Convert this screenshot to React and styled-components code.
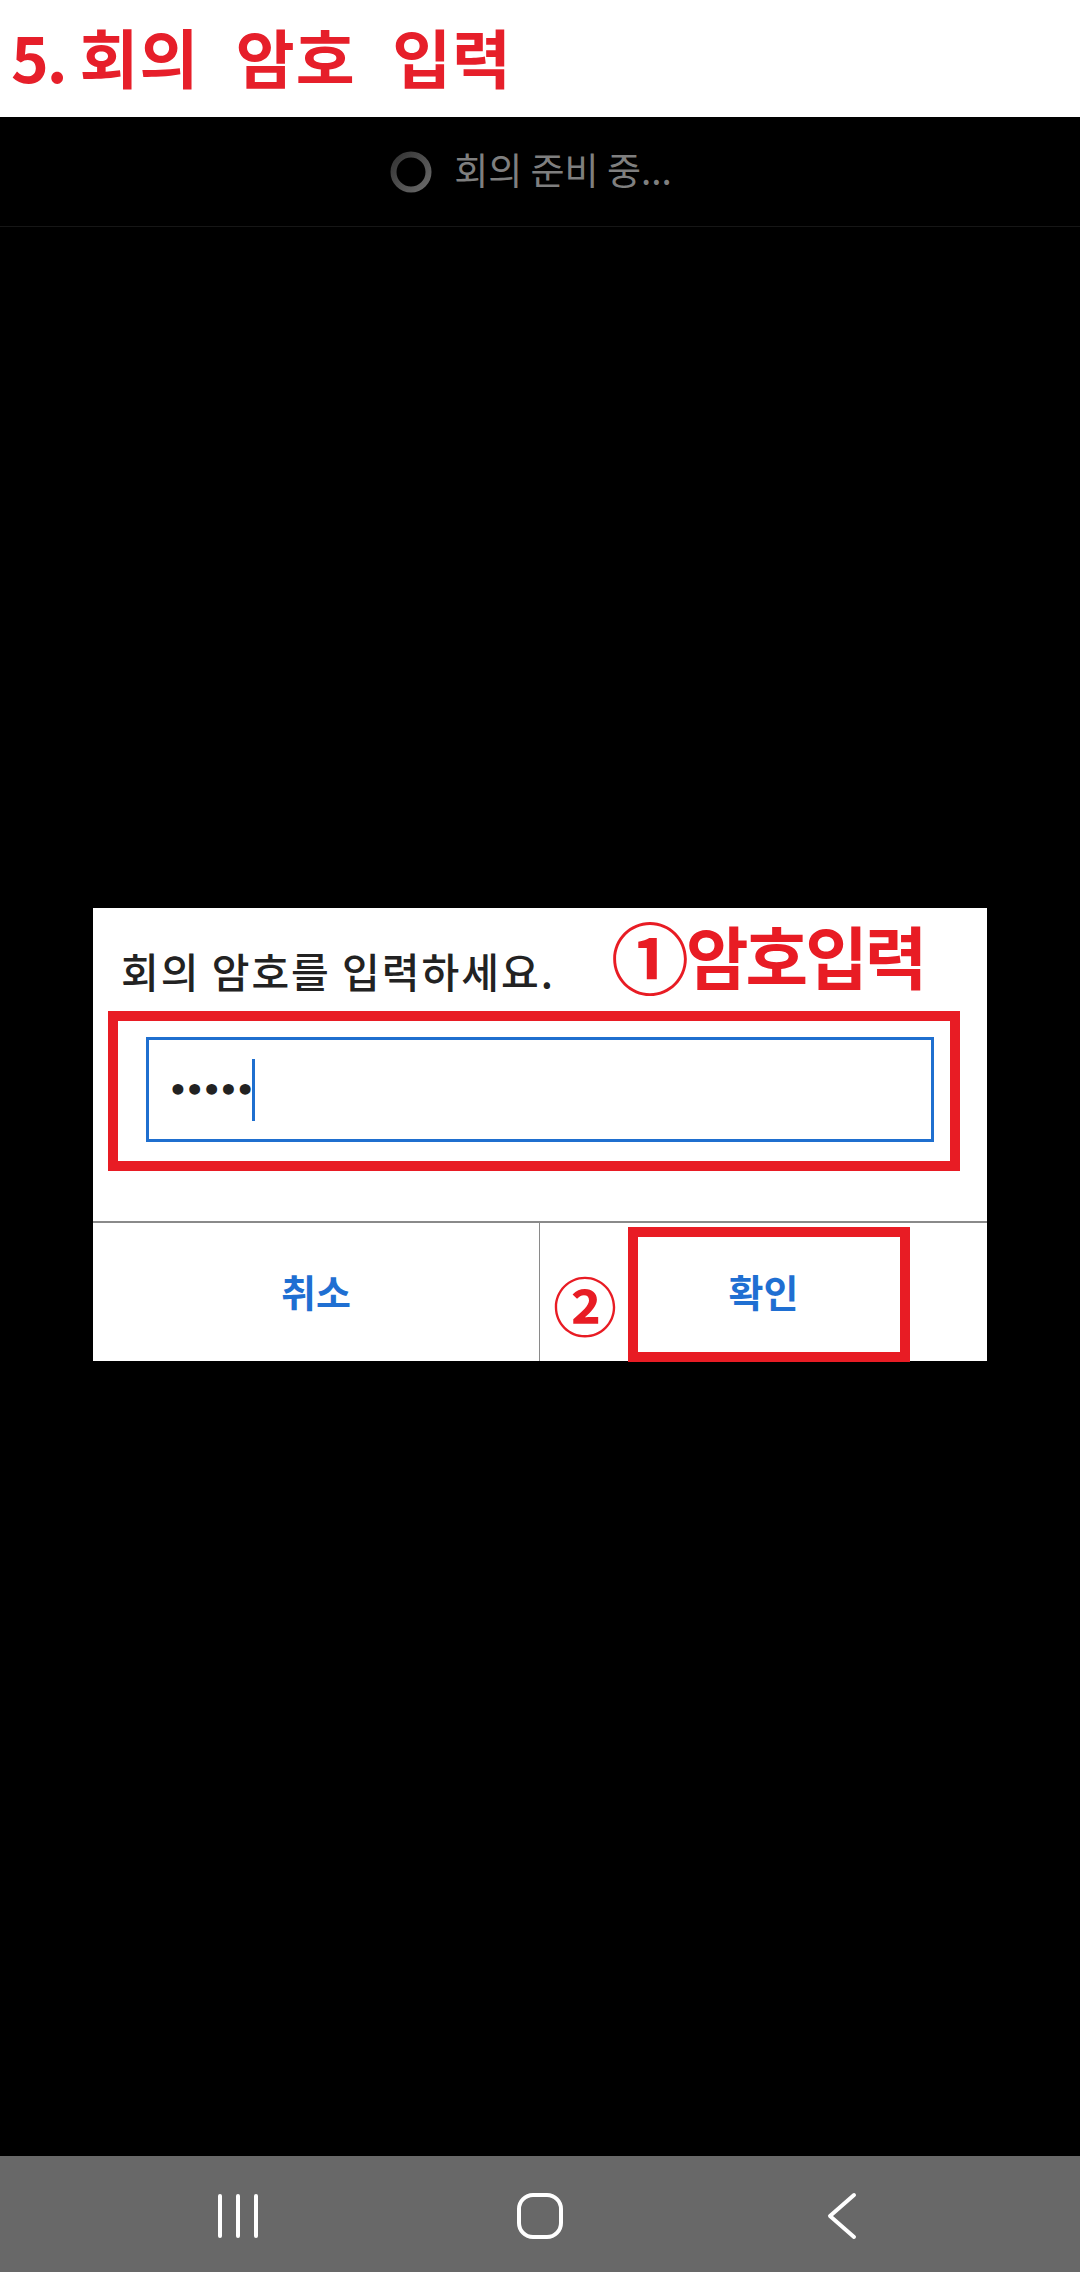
import React from "react";
import styled, { createGlobalStyle } from "styled-components";

const Global = createGlobalStyle`
  html, body { margin: 0; padding: 0; background: #000; }
  body { font-family: "Noto Sans CJK KR", "Noto Sans", sans-serif; }
  #root { min-height: 100vh; }
`;

const Page = styled.div`
  width: 1080px;
  height: 2272px;
  display: flex;
  flex-direction: column;
  background: #000;
`;

const Heading = styled.h1`
  margin: 0;
  height: 117px;
  flex: none;
  background: #fff;
  color: #e61f2a;
  font-family: "Noto Sans CJK KR", sans-serif;
  font-weight: 700;
  font-size: 64px;
  line-height: 110px;
  padding-left: 11px;
  box-sizing: border-box;
  white-space: nowrap;
  display: flex;
  gap: 14px;
`;

const HeadingNum = styled.span`
  letter-spacing: -2px;
`;

const HeadingText = styled.span`
  letter-spacing: 1px;
  word-spacing: 21px;
`;

const Screen = styled.div`
  flex: 1;
  display: flex;
  flex-direction: column;
  background: #000;
`;

const StatusBar = styled.div`
  height: 110px;
  flex: none;
  display: flex;
  align-items: center;
  justify-content: center;
  gap: 20px;
  border-bottom: 1px solid #161616;
  box-sizing: border-box;
  padding-right: 20px;
`;

const StatusText = styled.span`
  color: #7f7f7f;
  font-size: 37px;
  line-height: 1;
  padding-bottom: 4px;
`;

const Stage = styled.div`
  flex: 1;
  display: flex;
  flex-direction: column;
  align-items: flex-start;
  padding-top: 681px;
  padding-left: 93px;
`;

const Dialog = styled.div`
  position: relative;
  width: 894px;
  background: #fff;
  display: flex;
  flex-direction: column;
`;

const DialogBody = styled.div`
  padding: 34px 53px 79px 53px;
  display: flex;
  flex-direction: column;
  gap: 39px;
`;

const DialogTitle = styled.div`
  font-size: 41px;
  line-height: 56px;
  letter-spacing: 2px;
  color: #222;
  font-weight: 500;
  margin-left: -25px;
`;

const InputWrap = styled.div`
  position: relative;
`;

const Input = styled.div`
  height: 105px;
  border: 3px solid #1f6fcf;
  box-sizing: border-box;
  display: flex;
  align-items: center;
  padding-left: 19px;
`;

const Dots = styled.span`
  color: #222;
  font-size: 31px;
  letter-spacing: -3px;
  font-weight: 700;
  font-family: "DejaVu Sans", sans-serif;
`;

const Caret = styled.span`
  width: 3px;
  height: 62px;
  background: #1f6fcf;
`;

const Highlight = styled.div`
  position: absolute;
  border: 10px solid #e81c24;
  box-sizing: border-box;
  pointer-events: none;
`;

const InputHighlight = styled(Highlight)`
  left: -38px;
  right: -26px;
  top: -26px;
  bottom: -29px;
`;

const Note = styled.span`
  position: absolute;
  color: #e81c24;
  font-weight: 700;
  font-family: "Noto Sans CJK KR", sans-serif;
  line-height: 1;
  white-space: nowrap;
  display: flex;
  align-items: center;
`;

const Circled = styled.span`
  font-size: ${(p) => p.$size}px;
  line-height: 1;
`;

const TitleNote = styled(Note)`
  left: 518px;
  top: 8px;
  font-size: 68px;
  letter-spacing: -3px;
`;

const ButtonRow = styled.div`
  display: grid;
  grid-template-columns: 446px 1fr;
  height: 140px;
  border-top: 2px solid #8a8a8a;
  box-sizing: border-box;
`;

const Button = styled.div`
  position: relative;
  display: flex;
  align-items: center;
  justify-content: center;
  color: #1f6fd2;
  font-size: 38px;
  font-weight: 700;
  border-left: ${(p) => (p.$divider ? "1px solid #8a8a8a" : "none")};
  padding-bottom: 4px;
  box-sizing: border-box;
`;

const ConfirmHighlight = styled(Highlight)`
  left: 88px;
  top: 4px;
  width: 282px;
  height: 135px;
`;

const StepNote = styled(Note)`
  left: 13px;
  top: 48px;
`;

const NavBar = styled.div`
  height: 116px;
  flex: none;
  background: #686868;
  display: flex;
  align-items: center;
  justify-content: center;
  gap: 242px;
  padding-top: 4px;
  box-sizing: border-box;
`;

const NavSlot = styled.div`
  width: 60px;
  height: 60px;
  display: flex;
  align-items: center;
  justify-content: center;
`;

const Spinner = () => (
  <svg width="46" height="46" viewBox="0 0 46 46">
    <defs>
      <linearGradient id="sg" x1="0" y1="0" x2="1" y2="1">
        <stop offset="0" stopColor="#333" />
        <stop offset="1" stopColor="#6a6a6a" />
      </linearGradient>
    </defs>
    <circle cx="23" cy="23" r="17.5" fill="none" stroke="url(#sg)" strokeWidth="6" />
  </svg>
);

export default function App() {
  return (
    <Page>
      <Global />
      <Heading>
        <HeadingNum>5.</HeadingNum>
        <HeadingText>회의 암호 입력</HeadingText>
      </Heading>
      <Screen>
        <StatusBar>
          <Spinner />
          <StatusText>회의 준비 중...</StatusText>
        </StatusBar>
        <Stage>
          <Dialog>
            <DialogBody>
              <DialogTitle>회의 암호를 입력하세요.</DialogTitle>
              <InputWrap>
                <Input>
                  <Dots>•••••</Dots>
                  <Caret />
                </Input>
                <InputHighlight />
              </InputWrap>
            </DialogBody>
            <TitleNote>
              <Circled $size={78}>①</Circled>암호입력
            </TitleNote>
            <ButtonRow>
              <Button>취소</Button>
              <Button $divider>
                확인
                <StepNote>
                  <Circled $size={64}>②</Circled>
                </StepNote>
                <ConfirmHighlight />
              </Button>
            </ButtonRow>
          </Dialog>
        </Stage>
        <NavBar>
          <NavSlot>
            <svg width="44" height="48" viewBox="0 0 44 48">
              <g stroke="#fff" strokeWidth="4" strokeLinecap="round">
                <line x1="4" y1="4" x2="4" y2="44" />
                <line x1="22" y1="4" x2="22" y2="44" />
                <line x1="40" y1="4" x2="40" y2="44" />
              </g>
            </svg>
          </NavSlot>
          <NavSlot>
            <svg width="48" height="48" viewBox="0 0 48 48">
              <rect x="3" y="3" width="42" height="42" rx="14" fill="none" stroke="#fff" strokeWidth="4" />
            </svg>
          </NavSlot>
          <NavSlot>
            <svg width="32" height="48" viewBox="0 0 32 48">
              <polyline points="28,3 4,24 28,45" fill="none" stroke="#fff" strokeWidth="4" strokeLinecap="round" strokeLinejoin="round" />
            </svg>
          </NavSlot>
        </NavBar>
      </Screen>
    </Page>
  );
}
